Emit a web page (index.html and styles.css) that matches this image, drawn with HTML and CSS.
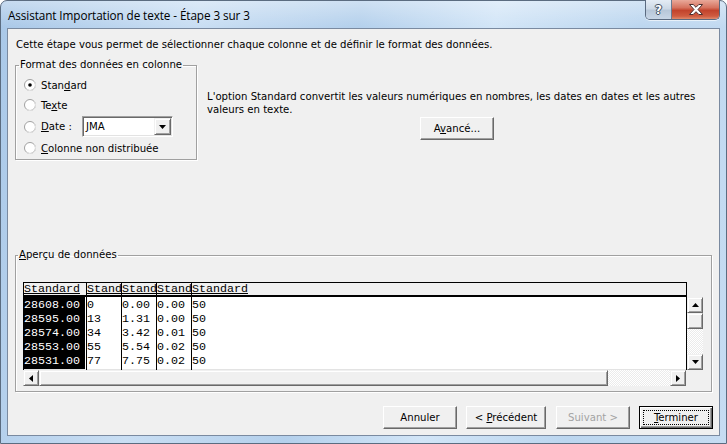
FILE: index.html
```html
<!DOCTYPE html>
<html lang="fr">
<head>
<meta charset="utf-8">
<title>Assistant Importation de texte</title>
<link rel="stylesheet" href="styles.css">
</head>
<body>
<div class="window">
  <div class="titlebar">
    <span class="title">Assistant Importation de texte - Étape 3 sur 3</span>
    <div class="caption-btns">
      <div class="cbtn help"><span>?</span></div>
      <div class="cbtn close">
        <svg width="14" height="11" viewBox="0 0 14 11"><path d="M0.5 0.5H4.2L7 3.3L9.8 0.5H13.5L9 5.5L13.5 10.5H9.8L7 7.7L4.2 10.5H0.5L5 5.5Z" fill="#fff" stroke="#4a3030" stroke-width="1" stroke-linejoin="round"/></svg>
      </div>
    </div>
  </div>
  <div class="client">
    <p class="intro">Cette étape vous permet de sélectionner chaque colonne et de définir le format des données.</p>
    <div class="format-row">
      <fieldset class="group format">
        <legend>Format des données en colonne</legend>
        <div class="opt">
          <svg class="radio" width="12" height="12" viewBox="0 0 12 12"><circle cx="6" cy="6" r="5.5" fill="#fff" stroke="#a0a0a0"/><path d="M10 2.2A5.3 5.3 0 0 1 2.2 10" fill="none" stroke="#e3e3e3"/><circle cx="6" cy="6" r="1.8" fill="#000"/></svg>
          <span>Stan<u>d</u>ard</span>
        </div>
        <div class="opt">
          <svg class="radio" width="12" height="12" viewBox="0 0 12 12"><circle cx="6" cy="6" r="5.5" fill="#fff" stroke="#a0a0a0"/><path d="M10 2.2A5.3 5.3 0 0 1 2.2 10" fill="none" stroke="#e3e3e3"/></svg>
          <span>Te<u>x</u>te</span>
        </div>
        <div class="opt date">
          <svg class="radio" width="12" height="12" viewBox="0 0 12 12"><circle cx="6" cy="6" r="5.5" fill="#fff" stroke="#a0a0a0"/><path d="M10 2.2A5.3 5.3 0 0 1 2.2 10" fill="none" stroke="#e3e3e3"/></svg>
          <span class="date-label"><u>D</u>ate :</span>
          <div class="combo">
            <span class="combo-value">JMA</span>
            <span class="combo-btn"><svg width="7" height="4" viewBox="0 0 7 4"><path d="M0 0H7L3.5 4Z" fill="#000"/></svg></span>
          </div>
        </div>
        <div class="opt">
          <svg class="radio" width="12" height="12" viewBox="0 0 12 12"><circle cx="6" cy="6" r="5.5" fill="#fff" stroke="#a0a0a0"/><path d="M10 2.2A5.3 5.3 0 0 1 2.2 10" fill="none" stroke="#e3e3e3"/></svg>
          <span><u>C</u>olonne non distribuée</span>
        </div>
      </fieldset>
      <div class="desc">
        <p>L'option Standard convertit les valeurs numériques en nombres, les dates en dates et les autres<br>valeurs en texte.</p>
        <button class="btn adv"><span>A<u>v</u>ancé...</span></button>
      </div>
    </div>

    <fieldset class="group preview">
      <legend><u>A</u>perçu de données</legend>
      <div class="table-wrap">
        <div class="grid">
          <div class="col c1">
            <div class="hcell"><u>Standard</u></div>
            <div class="dcells">
              <div class="dcell">28608.00</div>
              <div class="dcell">28595.00</div>
              <div class="dcell">28574.00</div>
              <div class="dcell">28553.00</div>
              <div class="dcell">28531.00</div>
            </div>
          </div>
          <div class="col c2">
            <div class="hcell"><u>Stand</u></div>
            <div class="dcells">
              <div class="dcell">0</div>
              <div class="dcell">13</div>
              <div class="dcell">34</div>
              <div class="dcell">55</div>
              <div class="dcell">77</div>
            </div>
          </div>
          <div class="col c3">
            <div class="hcell"><u>Stand</u></div>
            <div class="dcells">
              <div class="dcell">0.00</div>
              <div class="dcell">1.31</div>
              <div class="dcell">3.42</div>
              <div class="dcell">5.54</div>
              <div class="dcell">7.75</div>
            </div>
          </div>
          <div class="col c4">
            <div class="hcell"><u>Stand</u></div>
            <div class="dcells">
              <div class="dcell">0.00</div>
              <div class="dcell">0.00</div>
              <div class="dcell">0.01</div>
              <div class="dcell">0.02</div>
              <div class="dcell">0.02</div>
            </div>
          </div>
          <div class="col c5">
            <div class="hcell"><u>Standard</u></div>
            <div class="dcells">
              <div class="dcell">50</div>
              <div class="dcell">50</div>
              <div class="dcell">50</div>
              <div class="dcell">50</div>
              <div class="dcell">50</div>
            </div>
          </div>
        </div>
        <div class="vscroll">
          <div class="sb-btn raised"><svg width="7" height="4" viewBox="0 0 7 4"><path d="M0 4H7L3.5 0Z" fill="#000"/></svg></div>
          <div class="sb-thumb raised"></div>
          <div class="sb-track"></div>
          <div class="sb-btn raised"><svg width="7" height="4" viewBox="0 0 7 4"><path d="M0 0H7L3.5 4Z" fill="#000"/></svg></div>
        </div>
      </div>
      <div class="hscroll-row">
        <div class="hscroll">
          <div class="sb-btn raised"><svg width="4" height="7" viewBox="0 0 4 7"><path d="M4 0V7L0 3.5Z" fill="#000"/></svg></div>
          <div class="sb-thumb hthumb raised"></div>
          <div class="sb-track"></div>
          <div class="sb-btn raised"><svg width="4" height="7" viewBox="0 0 4 7"><path d="M0 0V7L4 3.5Z" fill="#000"/></svg></div>
        </div>
        <div class="corner"></div>
      </div>
    </fieldset>

    <div class="actions">
      <button class="btn w74"><span>Annuler</span></button>
      <button class="btn w80"><span>&lt; <u>P</u>récédent</span></button>
      <button class="btn w74 disabled"><span>Suivant &gt;</span></button>
      <button class="btn w74 default"><span class="focus"><span><u>T</u>erminer</span></span></button>
    </div>
  </div>
</div>
</body>
</html>
```
FILE: styles.css
```css
* { box-sizing: border-box; }
html, body { margin: 0; padding: 0; }
body {
  width: 727px;
  height: 444px;
  overflow: hidden;
  background: #fff;
  font-family: "DejaVu Sans Condensed", "DejaVu Sans", sans-serif;
  font-size: 11.25px;
  color: #000;
}
p { margin: 0; }
u { text-decoration: underline; text-underline-offset: 1px; }

.window {
  width: 727px;
  height: 444px;
  display: flex;
  flex-direction: column;
  border: 1px solid #5b6c80;
  border-radius: 7px 7px 0 0;
  padding: 0 6px 7px 6px;
  background:
    linear-gradient(180deg, rgba(255,255,255,0.35), rgba(255,255,255,0) 26px),
    linear-gradient(100deg, #a9c8e8 0%, #c9def3 25%, #b4d0ec 45%, #d2e5f7 62%, #bcd6ef 80%, #c6dcf2 100%);
}

.titlebar {
  height: 27px;
  display: flex;
  align-items: flex-start;
  flex-shrink: 0;
}
.title {
  font-family: "Open Sans", "Noto Sans", sans-serif;
  font-size: 11.75px;
  line-height: 16px;
  padding: 6px 0 0 1px;
  color: #000;
  letter-spacing: -0.1px;
}
.caption-btns {
  margin-left: auto;
  margin-top: -1px;
  display: flex;
  height: 20px;
  border: 1px solid #5a6a80;
  border-top: none;
  border-radius: 0 0 5px 5px;
  overflow: hidden;
  box-shadow: 0 1px 0 rgba(255,255,255,0.6);
}
.cbtn {
  height: 19px;
  display: flex;
  align-items: center;
  justify-content: center;
}
.help {
  width: 26px;
  border-right: 1px solid #6a7a90;
  background: linear-gradient(180deg, #e4ecf5 0%, #cdd9e6 45%, #b7c7d9 55%, #c8d6e6 100%);
}
.help span {
  font-family: "DejaVu Sans", sans-serif;
  font-weight: bold;
  font-size: 12px;
  color: #fff;
  text-shadow: 0 0 1px #2d3a4a, 1px 0 0 #46566a, -1px 0 0 #46566a, 0 1px 0 #46566a, 0 -1px 0 #46566a;
}
.close {
  width: 47px;
  background: linear-gradient(180deg, #e9a99a 0%, #d6735f 40%, #c2432c 55%, #cf5c40 85%, #e08a6c 100%);
}

.client {
  flex: 1;
  background: #f0f0f0;
  border: 1px solid #7a8aa0;
  display: flex;
  flex-direction: column;
}
.intro {
  line-height: 13px;
  padding: 9px 0 0 8px;
}

.format-row {
  display: flex;
  margin-top: 7px;
}

.group {
  margin: 0;
  min-inline-size: 0;
  border: 1px solid #a0a0a0;
  box-shadow: inset 1px 1px 0 #fff, 1px 1px 0 #fff;
}
.group legend {
  padding: 0 1px;
  margin-left: -5px;
  line-height: 14px;
}

.format {
  margin-left: 7px;
  width: 182px;
  padding: 3px 4px 1px 8px;
}
.opt {
  display: flex;
  align-items: center;
  height: 20px;
}
.opt.date { height: 23px; }
.radio { flex-shrink: 0; margin-right: 5px; }
.date-label { width: 41px; flex-shrink: 0; }

.combo {
  width: 91px;
  height: 21px;
  display: flex;
  align-items: stretch;
  background: #fff;
  border: 1px solid;
  border-color: #a0a0a0 #fff #fff #a0a0a0;
  box-shadow: inset 1px 1px 0 #696969, inset -1px -1px 0 #e3e3e3;
  padding: 1px;
}
.combo-value {
  flex: 1;
  padding-left: 2px;
  line-height: 17px;
}
.combo-btn {
  width: 17px;
  display: flex;
  align-items: center;
  justify-content: center;
  background: #f0f0f0;
  border: 1px solid;
  border-color: #f0f0f0 #696969 #696969 #f0f0f0;
  box-shadow: inset 1px 1px 0 #fff, inset -1px -1px 0 #a0a0a0;
}

.desc {
  margin-left: 10px;
  margin-top: 32px;
}
.desc p { line-height: 13px; }

.btn {
  font-family: inherit;
  font-size: 11.25px;
  color: #000;
  height: 23px;
  padding: 0;
  background: #f0f0f0;
  border: 1px solid;
  border-color: #fff #696969 #696969 #fff;
  box-shadow: inset -1px -1px 0 #a0a0a0, inset 1px 1px 0 #f0f0f0;
  display: flex;
  align-items: center;
  justify-content: center;
  white-space: nowrap;
}
.adv {
  width: 74px;
  margin: 1px 0 0 213px;
}

.preview {
  margin: 88px 7px 0 7px;
  padding: 20px 0 5px 7px;
}
.table-wrap {
  display: flex;
  align-items: flex-start;
}
.grid {
  width: 664px;
  display: flex;
  border-left: 1px solid #000;
  border-right: 1px solid #000;
  font-family: "Liberation Mono", "DejaVu Sans Mono", monospace;
  font-size: 11.67px;
  background: #fff;
}
.col { display: flex; flex-direction: column; }
.c1 { width: 62px; }
.c2, .c3, .c4 { width: 35px; border-left: 1px solid #000; }
.c5 { flex: 1; border-left: 1px solid #000; }
.hcell {
  height: 15px;
  line-height: 12px;
  background: #f0f0f0;
  border-top: 1px solid #000;
  border-bottom: 2px solid #000;
  white-space: nowrap;
  overflow: hidden;
}
.dcells {
  height: 73px;
  padding-top: 1px;
  border-bottom: 1px solid #e3e3e3;
}
.dcell {
  height: 14px;
  line-height: 14px;
  white-space: nowrap;
}
.c1 .dcells { background: #000; margin-right: 1px; }
.c1 .dcell { color: #fff; }

.vscroll {
  width: 16px;
  height: 73px;
  margin-top: 15px;
  display: flex;
  flex-direction: column;
}
.raised {
  background: #f0f0f0;
  border: 1px solid;
  border-color: #f0f0f0 #696969 #696969 #f0f0f0;
  box-shadow: inset 1px 1px 0 #fff, inset -1px -1px 0 #a0a0a0;
}
.sb-btn {
  width: 16px;
  height: 16px;
  flex-shrink: 0;
  display: flex;
  align-items: center;
  justify-content: center;
}
.sb-thumb { height: 16px; flex-shrink: 0; }
.sb-track {
  flex: 1;
  background-color: #fff;
  background-image: repeating-conic-gradient(#ebebeb 0 25%, #fff 0 50%);
  background-size: 2px 2px;
}
.hscroll-row { display: flex; }
.hscroll {
  width: 663px;
  height: 16px;
  display: flex;
}
.hthumb { width: 569px; height: 16px; }
.corner { width: 17px; }

.actions {
  display: flex;
  justify-content: flex-end;
  gap: 9px;
  margin-top: 14px;
  padding-right: 6px;
}
.w74 { width: 74px; }
.w80 { width: 80px; margin-right: 1px; }
.disabled { color: #a3a3a3; }
.default {
  border: 1px solid #000;
  box-shadow: inset 1px 1px 0 #fff, inset -1px -1px 0 #696969, inset -2px -2px 0 #a0a0a0;
  padding: 3px;
  align-items: stretch;
}
.focus {
  flex: 1;
  border: 1px dotted #000;
  display: flex;
  align-items: center;
  justify-content: center;
}
```
